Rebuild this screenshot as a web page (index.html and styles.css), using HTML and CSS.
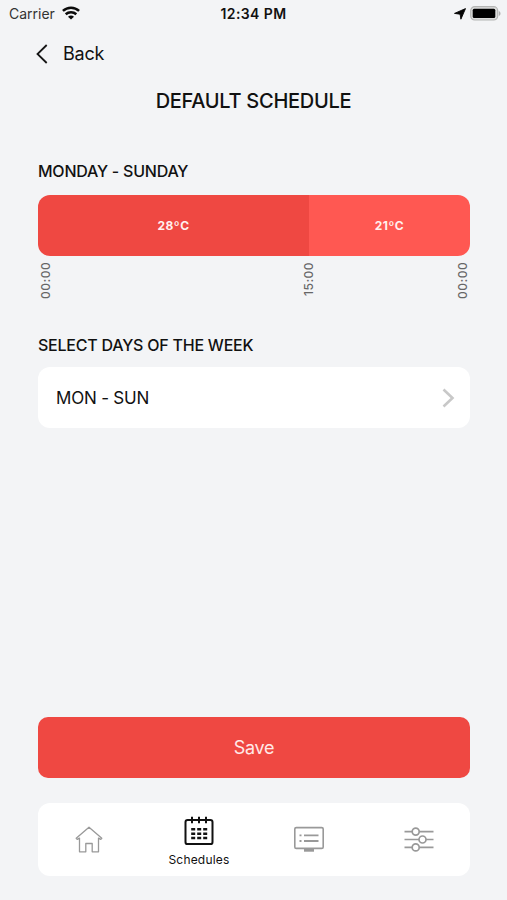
FILE: index.html
```html
<!DOCTYPE html>
<html lang="en">
<head>
<meta charset="utf-8">
<meta name="viewport" content="width=device-width, initial-scale=1">
<title>Default Schedule</title>
<link rel="stylesheet" href="styles.css">
</head>
<body>
<div class="screen">
  <div class="status">
    <div class="status-left">
      <span class="carrier">Carrier</span>
      <svg class="wifi" width="18" height="14" viewBox="0 0 18 14"><g fill="none" stroke="#0b0b0b" stroke-width="2.500"><path d="M.9 4.900C5.500.6 12.500.6 17.100 4.900"/><path d="M3.700 8.200c3-2.700 7.600-2.700 10.600 0"/></g><path d="M9 13.600 6 10.700c1.700-1.500 4.300-1.500 6 0z" fill="#0b0b0b"/></svg>
    </div>
    <span class="clock">12:34 PM</span>
    <div class="status-right">
      <svg width="12" height="12" viewBox="0 0 12 12"><path d="M11.500.6 6.900 11.200 6.100 6.200.5 5.400z" fill="#050505" stroke="#050505" stroke-width=".9" stroke-linejoin="round"/></svg>
      <svg class="battery" width="31" height="15" viewBox="0 0 31 15"><rect x=".7" y=".7" width="27" height="13.300" rx="4" fill="#dcdddc" stroke="#b4b5b4" stroke-width="1.200"/><rect x="2.700" y="2.700" width="22.600" height="9.300" rx="1.500" fill="#000"/><path d="M28.800 5c2.300.7 2.300 4.200 0 4.900z" fill="#b0b1b0"/></svg>
    </div>
  </div>
  <div class="back">
    <svg width="12" height="20" viewBox="0 0 12 20"><path d="M10.700 1 1.500 10l9.200 9" fill="none" stroke="#151515" stroke-width="1.800"/></svg>
    <span class="back-label">Back</span>
  </div>
  <h1 class="title">DEFAULT SCHEDULE</h1>
  <main class="content">
    <h2 class="heading heading-days">MONDAY - SUNDAY</h2>
    <div class="bar">
      <div class="slot slot-warm">28ºC</div>
      <div class="slot slot-cool">21ºC</div>
    </div>
    <div class="times">
      <span class="time">00:00</span>
      <span class="time time-mid">15:00</span>
      <span class="time">00:00</span>
    </div>
    <h2 class="heading heading-select">SELECT DAYS OF THE WEEK</h2>
    <div class="card">
      <span>MON - SUN</span>
      <svg width="13" height="20" viewBox="0 0 13 20"><path d="M1.500 1.500 10.500 10l-9 8.500" fill="none" stroke="#c8c8c8" stroke-width="2.600"/></svg>
    </div>
  </main>
  <button class="save">Save</button>
  <nav class="tabs">
    <div class="tab">
      <svg width="28" height="28" viewBox="0 0 28 28"><path d="M1.200 12.300 14 1.300l12.800 11-1 1.100-2.300-1.300v13.700h-6.300v-8.300h-6.400v8.300H4.500V12.100l-2.300 1.300z" fill="none" stroke="#999" stroke-width="1.300" stroke-linejoin="round"/></svg>
    </div>
    <div class="tab tab-active">
      <svg width="30" height="30" viewBox="0 0 30 30"><rect x="1.500" y="3.900" width="27" height="24.200" rx="2.200" fill="none" stroke="#111" stroke-width="2"/><path d="M8 .8v6.400M15 .8v6.400M22 .8v6.400" stroke="#111" stroke-width="2"/><path d="M7.200 13.300h4m2 0h4m2 0h4M7.200 17.700h4m2 0h4m2 0h4M7.200 22h4m2 0h4m2 0h4" stroke="#111" stroke-width="2.400"/></svg>
      <span class="tab-label">Schedules</span>
    </div>
    <div class="tab">
      <svg width="30" height="28" viewBox="0 0 30 28"><rect x=".8" y="1.600" width="28.400" height="20.800" rx="1.500" fill="none" stroke="#999" stroke-width="1.600"/><path d="M5.500 9.300h2M10 9.300h14.500M5.500 15h2M10 15h14.500" stroke="#999" stroke-width="1.800"/><path d="M10 22.500h10v3.200h-10z" fill="#999"/></svg>
    </div>
    <div class="tab">
      <svg width="30" height="28" viewBox="0 0 30 28"><g fill="#fff" stroke="#999" stroke-width="1.700"><path d="M.5 5.600h29M.5 13.500h29M.5 21.400h29"/><circle cx="11.700" cy="5.600" r="3.500"/><circle cx="18.500" cy="13.500" r="3.500"/><circle cx="11.700" cy="21.400" r="3.500"/></g></svg>
    </div>
  </nav>
</div>
</body>
</html>
```
FILE: styles.css
```css
* { box-sizing: border-box; }

body {
  margin: 0;
  background: #f3f4f6;
  color: #111;
  font-family: Inter, "Liberation Sans", sans-serif;
}

svg { display: block; flex: none; }

.screen {
  display: flex;
  flex-direction: column;
  height: 900px;
  overflow: hidden;
}

.status {
  display: grid;
  grid-template-columns: 1fr auto 1fr;
  align-items: center;
  height: 28px;
  padding: 0 6px 0 9px;
  line-height: 20px;
}

.status-left, .status-right {
  display: flex;
  align-items: center;
}

.status-left { gap: 7px; }
.status-right { justify-content: flex-end; gap: 4px; }
.carrier { font-size: 14px; color: #333; }
.clock { margin-right: 3px; font-size: 14px; font-weight: 600; letter-spacing: 0.4px; }
.wifi { margin-top: -2px; }
.battery { margin-top: -2px; }

.back {
  display: flex;
  align-items: center;
  gap: 15px;
  height: 51px;
  padding-left: 36px;
}

.back-label { font-size: 18px; letter-spacing: -0.2px; }

.title {
  margin: 0;
  height: 42px;
  font-size: 20px;
  font-weight: 500;
  line-height: 44px;
  letter-spacing: -0.27px;
  text-align: center;
}

.content { padding: 0 37px 0 38px; }

.heading {
  margin: 0;
  font-size: 16px;
  font-weight: 500;
  line-height: 20px;
  letter-spacing: -0.23px;
  white-space: nowrap;
}

.heading-days { margin-top: 40px; }
.heading-select { margin-top: 35px; }

.bar {
  display: grid;
  grid-template-columns: 271px 161px;
  height: 61px;
  margin-top: 14px;
  border-radius: 12px;
  overflow: hidden;
}

.slot {
  display: flex;
  align-items: center;
  justify-content: center;
  color: #fff0ee;
  font-size: 12px;
  font-weight: 700;
  letter-spacing: 0.5px;
}

.slot-warm { background: #ef4842; }
.slot-cool { background: #ff5852; }

.times {
  display: flex;
  justify-content: space-between;
  height: 44px;
  padding: 6px 0;
}

.time {
  width: 15px;
  height: 38px;
  color: #666;
  font-size: 12px;
  font-weight: 500;
  line-height: 15px;
  letter-spacing: 0.5px;
  writing-mode: vertical-rl;
  transform: rotate(180deg);
  text-align: right;
}

.time-mid { margin-left: 108px; }

.card {
  display: flex;
  align-items: center;
  justify-content: space-between;
  height: 61px;
  margin-top: 12px;
  padding: 0 15px 0 18px;
  border-radius: 12px;
  background: #fff;
  font-size: 17px;
  letter-spacing: -0.2px;
}

.save {
  height: 61px;
  margin: auto 37px 0 38px;
  padding: 0;
  border: 0;
  border-radius: 10px;
  background: #ef4842;
  color: #ffe9e7;
  font-family: inherit;
  font-size: 18px;
  letter-spacing: -0.3px;
}

.tabs {
  display: grid;
  grid-template-columns: repeat(4, 110px);
  justify-content: center;
  height: 73px;
  margin: 25px 37px 24px 38px;
  border-radius: 12px;
  background: #fff;
}

.tab {
  display: flex;
  flex-direction: column;
  align-items: center;
  justify-content: center;
}

.tab-active {
  justify-content: flex-start;
  padding-top: 13px;
}

.tab-label {
  margin-top: 6px;
  font-size: 12px;
  line-height: 16px;
  letter-spacing: 0.2px;
}
```
